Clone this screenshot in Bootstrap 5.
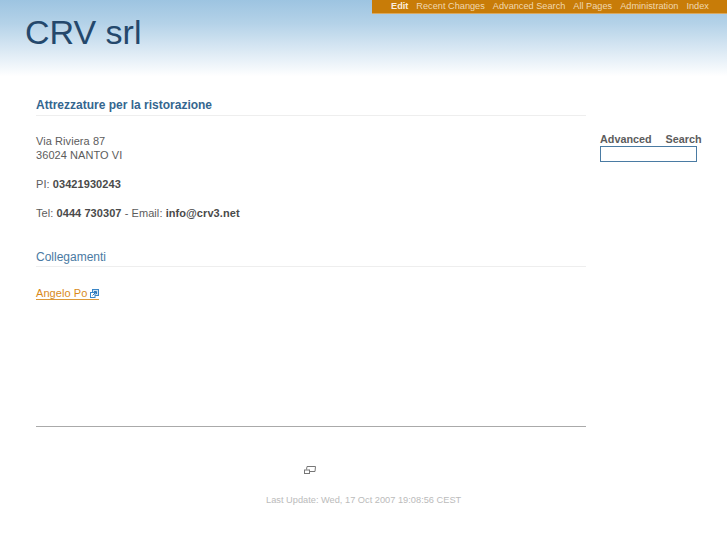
<!DOCTYPE html>
<html lang="it">
<head>
<meta charset="utf-8">
<title>CRV srl</title>
<link href="https://cdn.jsdelivr.net/npm/bootstrap@5.3.0/dist/css/bootstrap.min.css" rel="stylesheet">
<style>
body { font-family: "Liberation Sans", Arial, sans-serif; font-size: 11px; line-height: 14px; color: #5c5c5c; background: #fff; height: 545px; overflow: hidden; }
.page-head { height: 78px; background: linear-gradient(#9dc4e1 0%, #b4d2e8 30%, #dbe9f4 65%, #fff 98%); }
.top-menu { margin-left: 372px; height: 14px; background: #c87c08; padding-left: 19px; font-size: 9.2px; line-height: 12px; gap: 8px; border-bottom: 1px solid #d9a860; color: #f0d8b0; white-space: nowrap; }
.top-menu b { color: #fbeedd; }
.site-title { margin: 0 0 0 25px; padding-top: 0; height: 37px; font-size: 34px; line-height: 36px; font-weight: 400; color: #24486c; }
.main-wrap { padding: 0 0 0 36px; }
.main-col { width: 550px; }
.side-col { margin-left: 14px; padding-top: 54px; width: 115px; }
.sect-one { margin: 19px 0 18px; padding-bottom: 2px; font-size: 12px; line-height: 16px; font-weight: 700; color: #34668f; border-bottom: 1px solid #eee; }
.sect-two { margin: 29px 0 19px; padding-bottom: 1px; font-size: 12px; line-height: 16px; font-weight: 400; color: #4a7aa3; border-bottom: 1px solid #eee; }
.para-text { margin: 0 0 15px; letter-spacing: .07px; }
.para-text b { color: #4a4a4a; }
.ext-link { display: inline-block; line-height: 12px; color: #d98a1a; text-decoration: none; border-bottom: 1px solid #dd9a3a; }
.ext-link svg { vertical-align: -1px; margin-left: 3px; }
.rule-line { margin: 126px 0 0; border: 0; border-top: 1px solid #aaa; opacity: 1; }
.foot-icon { margin-top: 38px; height: 12px; padding-left: 268px; }
.foot-text { margin-top: 16px; padding-left: 230px; font-size: 9.25px; color: #bbb; white-space: nowrap; }
.side-label { font-size: 10.8px; font-weight: 700; color: #5c5c5c; word-spacing: 11px; line-height: 14px; white-space: nowrap; }
.side-input { display: block; width: 97px; height: 16px; padding: 0; border: 1px solid #4a7ba3; background: #fff; border-radius: 0; }
</style>
</head>
<body>
<header class="page-head">
  <div class="top-menu d-flex">
    <b>Edit</b><span>Recent Changes</span><span>Advanced Search</span><span>All Pages</span><span>Administration</span><span>Index</span>
  </div>
  <h1 class="site-title">CRV srl</h1>
</header>
<div class="main-wrap d-flex">
  <div class="main-col">
    <h2 class="sect-one">Attrezzature per la ristorazione</h2>
    <p class="para-text">Via Riviera 87<br>36024 NANTO VI</p>
    <p class="para-text">PI: <b>03421930243</b></p>
    <p class="para-text">Tel: <b>0444 730307</b> - Email: <b>info@crv3.net</b></p>
    <h3 class="sect-two">Collegamenti</h3>
    <p class="para-text"><a class="ext-link" href="#">Angelo Po<svg width="9" height="9" viewBox="0 0 9 9" fill="none" stroke="#3b86c6"><rect x="2.500" y=".5" width="6" height="6" fill="#cfe2f2"/><rect x=".5" y="3.500" width="4.500" height="5" fill="#fff"/><path d="M2.500 6.500L6 3M4 2.500H6.500V5" stroke="#2f78b8"/></svg></a></p>
    <hr class="rule-line">
    <div class="foot-icon"><svg class="d-block" width="12" height="10" viewBox="0 0 12 10" fill="none" stroke="#777"><path d="M2.500 4.500L3 1.500H11.500L11 6.500H6"/><rect x=".5" y="5" width="5" height="3.500" fill="#fff"/></svg></div>
    <div class="foot-text">Last Update: Wed, 17 Oct 2007 19:08:56 CEST</div>
  </div>
  <aside class="side-col">
    <div class="side-label">Advanced Search</div>
    <input class="side-input" type="text" aria-label="Advanced Search">
  </aside>
</div>
<script src="https://cdn.jsdelivr.net/npm/bootstrap@5.3.0/dist/js/bootstrap.bundle.min.js"></script>
</body>
</html>
